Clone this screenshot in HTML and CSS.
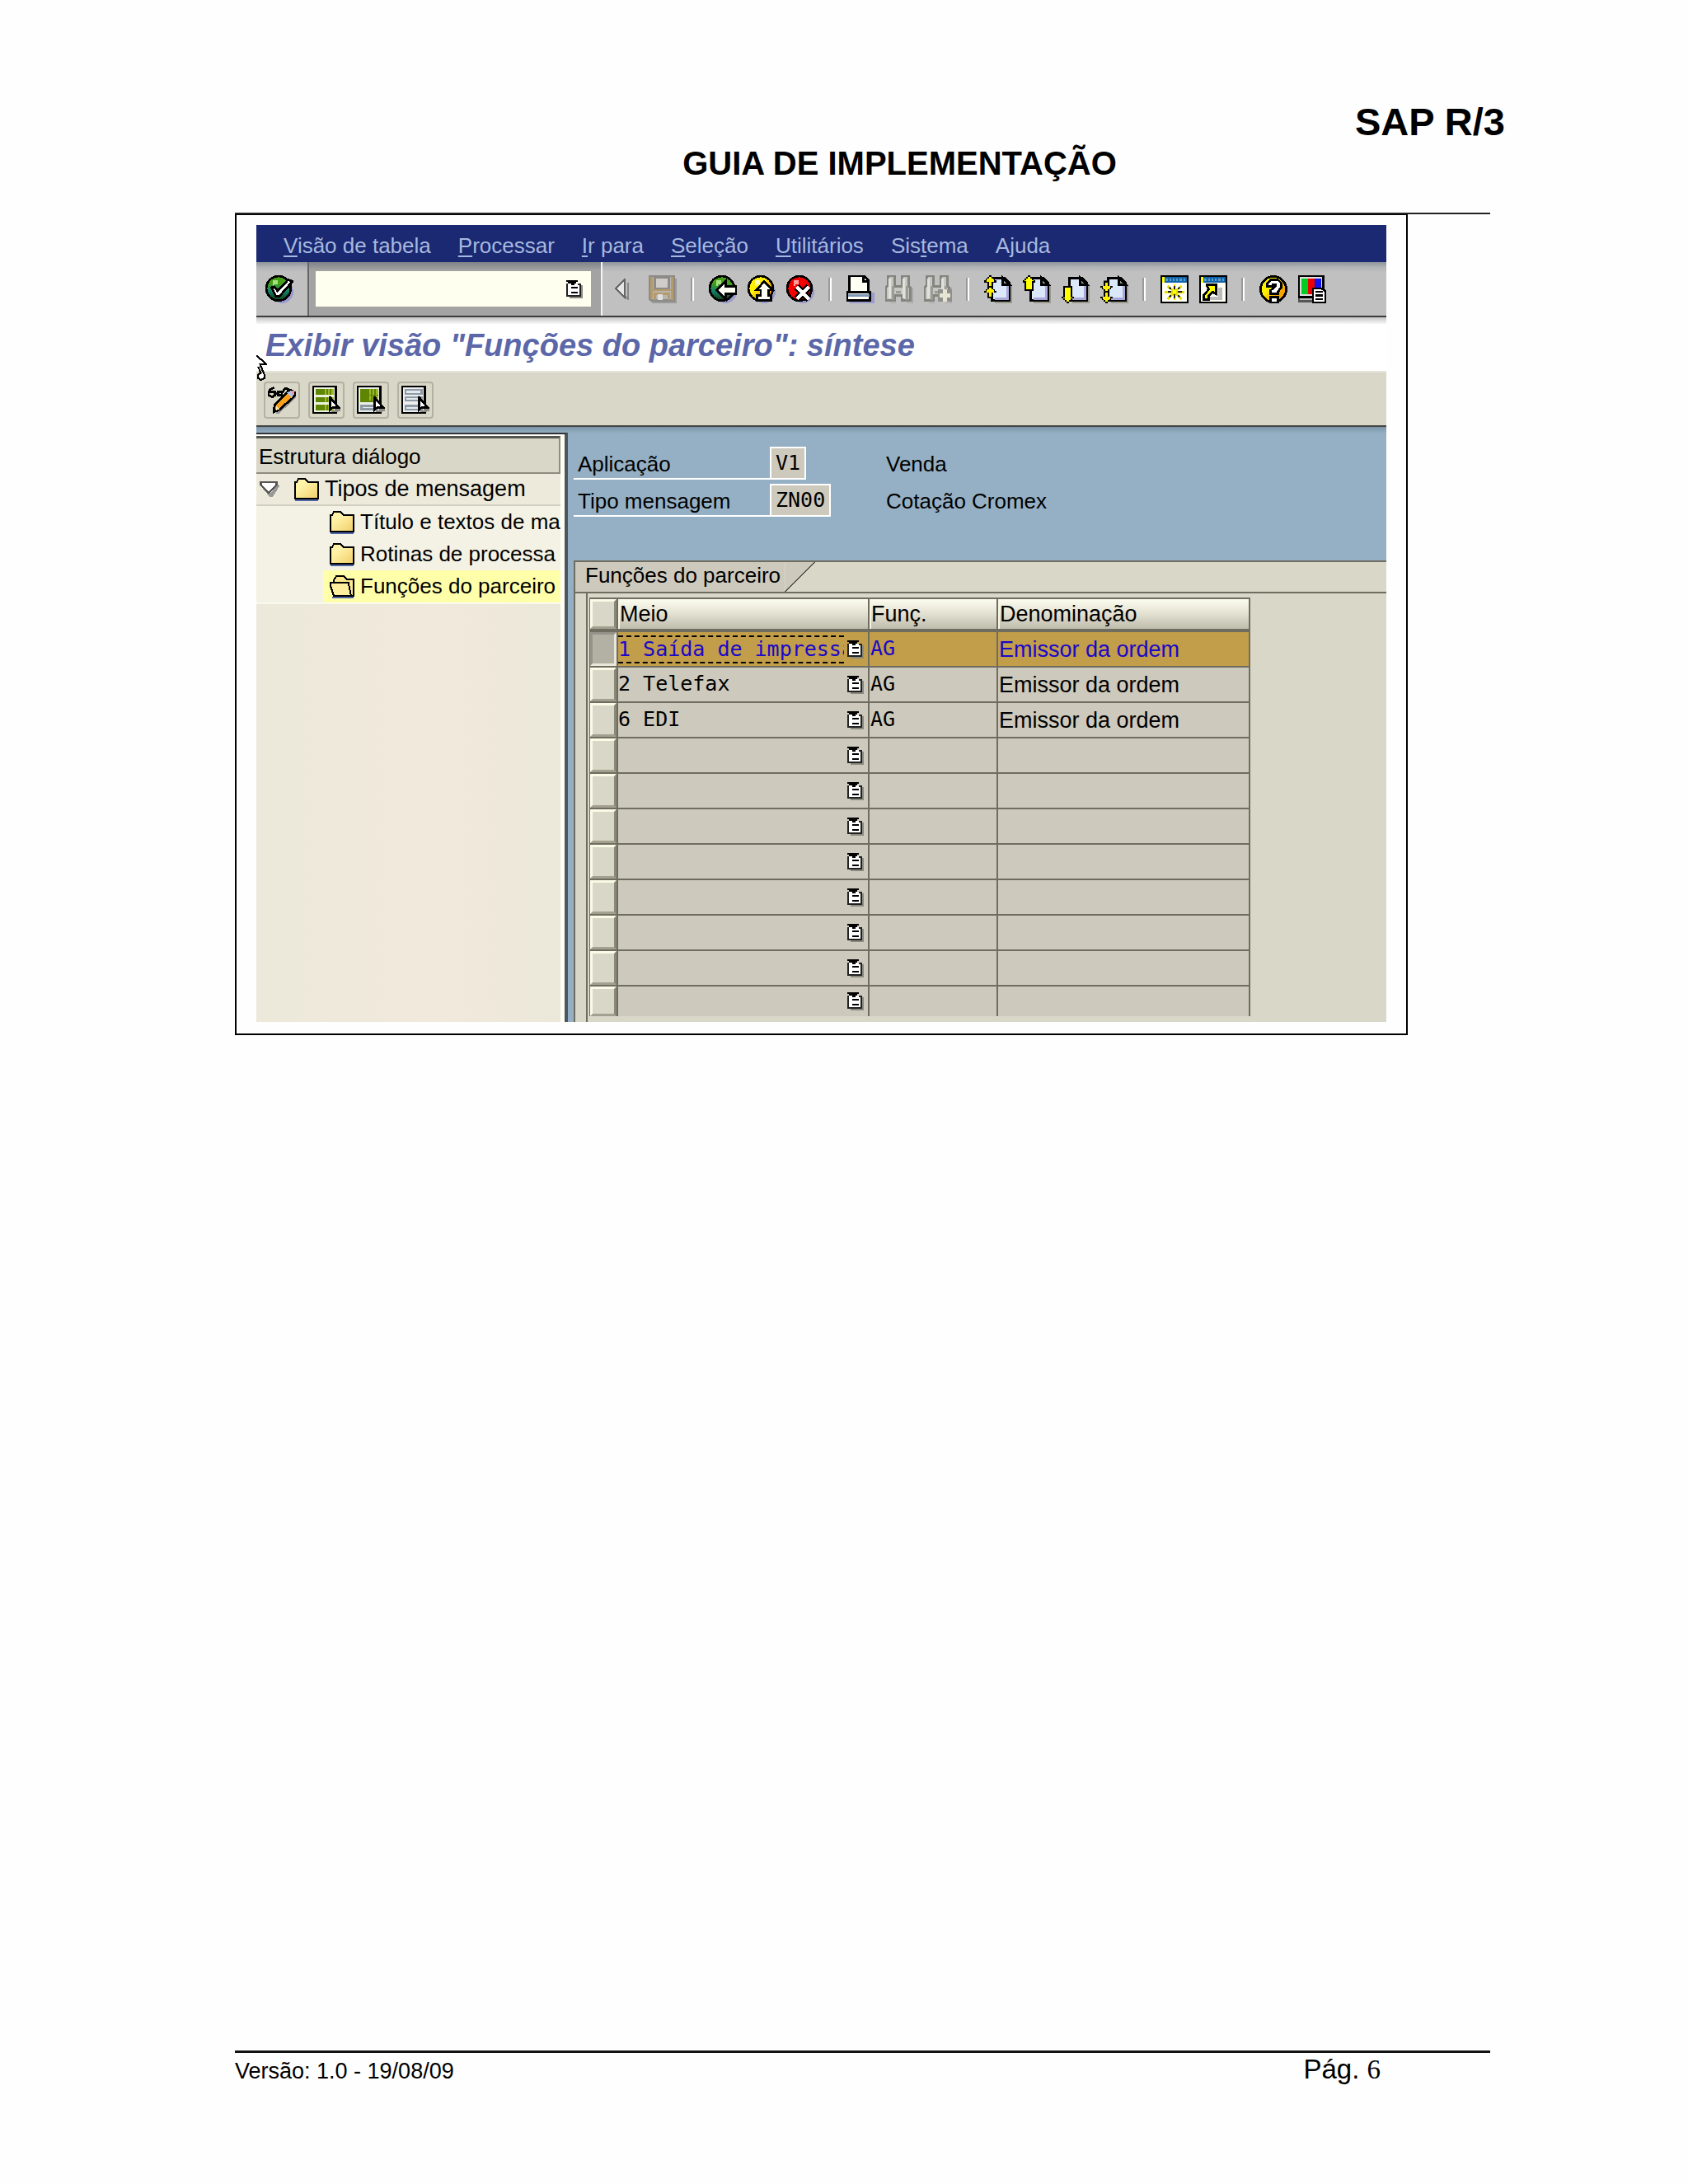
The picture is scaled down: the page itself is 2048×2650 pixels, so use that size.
FILE: index.html
```
<!DOCTYPE html>
<html lang="pt-BR">
<head>
	<meta charset="utf-8">
	<meta name="viewport" content="width=device-width, initial-scale=1.0">
	<title>SAP R/3 - Guia de Implementação</title>
	<link rel="stylesheet" href="styles.css">
</head>
<body>
	<!-- Shared icons -->
	<svg class="sprite" aria-hidden="true">
		<defs>
			<linearGradient id="gGreen" x1="0" y1="0" x2="0" y2="1"><stop offset="0.3" stop-color="#45a018"/><stop offset="0.6" stop-color="#14806c"/><stop offset="1" stop-color="#123c12"/></linearGradient>
			<linearGradient id="gYellow" x1="0" y1="0" x2="1" y2="1"><stop offset="0.4" stop-color="#fff000"/><stop offset="0.7" stop-color="#f5a400"/></linearGradient>
			<linearGradient id="gRed" x1="0" y1="0" x2="1" y2="1"><stop offset="0.5" stop-color="#f60000"/><stop offset="1" stop-color="#7c0010"/></linearGradient>
			<linearGradient id="gFolder" x1="0" y1="0" x2="1" y2="1"><stop offset="0.3" stop-color="#fff3a8"/><stop offset="1" stop-color="#f0cd6a"/></linearGradient>
		</defs>
		<symbol id="combo" viewBox="0 0 10 11">
			<path d="M2 10.500H9.500V3" fill="none" stroke="#8b8a80"/>
			<path d="M1 2H8V9H1Z" fill="#fff"/>
			<path d="M0.500 2V9.500H8.500V2.500H7" fill="none" stroke="#222"/>
			<path d="M0 0H7V1H6V2H5V3H3V2H1V1H0ZM3 4H7V5H3ZM3 7H7V8H3Z" fill="#000"/>
		</symbol>
		<symbol id="folder" viewBox="0 0 15 14">
			<path d="M0.500 13.500H14.500" stroke="#5166a8"/>
			<path d="M0.500 12.500V2.500H1.500L2.500 0.500H6.500L8.500 2.500H14.500V12.500Z" fill="url(#gFolder)" stroke="#000"/>
		</symbol>
		<symbol id="folder-open" viewBox="0 0 15 14">
			<path d="M1.500 13.500H14.500" stroke="#5166a8"/>
			<path d="M2.500 12.500V3L4 0.500H8.500L10.500 2.500H14.500V12.500Z" fill="#fbe88f" stroke="#000"/>
			<path d="M0.500 5V6.500L2.500 12.500H13L11.500 5.500V4.500H0.500Z" fill="#ffee9e" stroke="#000"/>
		</symbol>
		<symbol id="page" viewBox="0 0 16 16">
			<path d="M6 15.500H15.500V5" fill="none" stroke="#9b998d"/>
			<path d="M4.500 1.500H11.500L14.500 4.500V14.500H4.500Z" fill="#dbe8fa" stroke="#000"/>
			<path d="M6 13.400H13.400V6" fill="none" stroke="#a9a8d8" stroke-width="1"/>
			<path d="M10.500 1.500V5.500H14.500Z" fill="#8a948f" stroke="#000"/>
		</symbol>
		<symbol id="up" viewBox="0 0 7 7">
			<path d="M3 0H4V1H5V2H6V3H7V4H5V7H2V4H0V3H1V2H2V1H3Z" fill="#000"/>
			<path d="M3 1H4V2H5V3H4V6H3V3H2V2H3Z" fill="#ff0"/>
			<path d="M1.500 3.200H5.500M3.500 2V6" stroke="#ffee00"/>
		</symbol>
		<symbol id="binoculars" viewBox="0 0 16 16">
			<path d="M3 16H6M12 16H15.500V7" fill="none" stroke="#aaa"/>
			<path d="M1.500 0.500H5.500V6.500H9.500V0.500H13.500V6L14.500 7.500V14.500H9.500V11.500H5.500V14.500H0.500V7L1.500 6Z" fill="#c6c6c2" stroke="#84857f"/>
			<path d="M2.500 2V13M10.500 2V13" stroke="#e2e2dc"/>
			<path d="M4.500 6V14M12.500 6V14M6 9.500H9" stroke="#9b9c96"/>
		</symbol>
		<symbol id="pointer" viewBox="0 0 6 9">
			<path d="M1.500 9H5M3 8H6V7" fill="none" stroke="#8e8d84"/>
			<path d="M0.500 0.500V8L2 6.500H5.500Z" fill="#fff" stroke="#000"/>
		</symbol>
	</svg>

	<div class="page">
		<header class="page-header">
			<div class="product">SAP R/3</div>
			<h1>GUIA DE IMPLEMENTAÇÃO</h1>
		</header>

		<main class="frame">
			<div class="window">
				<nav class="menu">
					<a href="#"><u>V</u>isão de tabela</a>
					<a href="#"><u>P</u>rocessar</a>
					<a href="#"><u>I</u>r para</a>
					<a href="#"><u>S</u>eleção</a>
					<a href="#"><u>U</u>tilitários</a>
					<a href="#">Sis<u>t</u>ema</a>
					<a href="#">A<u>j</u>uda</a>
				</nav>

				<div class="toolbar">
					<div class="ok">
						<button type="button" aria-label="Continuar">
							<svg viewBox="0 0 16 16"><circle cx="9.500" cy="9.500" r="6.500" fill="#9c9acc"/><circle cx="7.500" cy="7.500" r="7" fill="url(#gGreen)" stroke="#000"/><path d="M4 3H7V5H5V6H4Z" fill="#a4e080"/><path d="M3.500 7L5 6.500L7 9L13 2.500L15.500 3.500L8 12H6Z" fill="#fff" stroke="#000"/></svg>
						</button>
					</div>
					<div class="command">
						<div class="command-box">
							<input type="text" aria-label="Comando">
							<button type="button" aria-label="Histórico"><svg class="combo"><use href="#combo"/></svg></button>
						</div>
					</div>
					<div class="tools">
						<button type="button" class="back" aria-label="Recolher" disabled>
							<svg viewBox="0 0 8 12"><path d="M2 7L7.500 11.500V2" fill="none" stroke="#888"/><path d="M0.500 5.500L5.500 0.500V10.500Z" fill="#e6e6e6" stroke="#666"/></svg>
						</button>
						<button type="button" aria-label="Gravar" disabled>
							<svg viewBox="0 0 16 16"><path d="M2 15.500H15.500V2" fill="none" stroke="#999"/><path d="M0.500 0.500H14.500V14.500H1.500L0.500 13.500Z" fill="#b9b5ae" stroke="#8c8b88"/><path d="M1.500 1V13M13.500 1V14M2 8.500H13M3.500 14V10.500H11.500V14" fill="none" stroke="#b59b6c"/><path d="M3.500 1H11.500V7.500H3.500Z" fill="#cfcdca" stroke="#8c8b88"/><path d="M5 11H8V14H5Z" fill="#dedede"/></svg>
						</button>
						<span class="sep"></span>
						<button type="button" aria-label="Voltar">
							<svg viewBox="0 0 16 16"><circle cx="9.500" cy="9.500" r="6.500" fill="#9c9acc"/><circle cx="7.500" cy="7.500" r="7" fill="url(#gGreen)" stroke="#000"/><path d="M4 3H7V5H5V6H4Z" fill="#a4e080"/><path d="M4.500 8.500L9.500 3.500V6.500H15.500V10.500H9.500V13.500Z" fill="#fffff4" stroke="#000"/></svg>
						</button>
						<button type="button" aria-label="Encerrar">
							<svg viewBox="0 0 16 16"><circle cx="9.500" cy="9.500" r="6.500" fill="#9c9acc"/><circle cx="7.500" cy="7.500" r="7" fill="url(#gYellow)" stroke="#000"/><path d="M4 3H7V5H5V6H4Z" fill="#fffbc0"/><path d="M9.500 3.500L14.500 8.500H12V11.500H13.500V14.500H5.500V11.500H7.500V8.500H5Z" fill="#fffff4" stroke="#000"/></svg>
						</button>
						<button type="button" aria-label="Cancelar">
							<svg viewBox="0 0 16 16"><circle cx="9.500" cy="9.500" r="6.500" fill="#9c9acc"/><circle cx="7.500" cy="7.500" r="7" fill="url(#gRed)" stroke="#000"/><path d="M4 3H7V5H5V6H4Z" fill="#ffa0a0"/><path d="M6 6.500L13 13.500M13 6.500L6 13.500" stroke="#000" stroke-width="4"/><path d="M6 6.500L13 13.500M13 6.500L6 13.500" stroke="#fff" stroke-width="2"/></svg>
						</button>
						<span class="sep"></span>
						<button type="button" aria-label="Imprimir">
							<svg viewBox="0 0 16 16"><path d="M2 15H15V10" fill="none" stroke="#9c9acc" stroke-width="2"/><path d="M0.500 9.500H13.500V14.500H0.500Z" fill="#fffff4" stroke="#000"/><path d="M1 11.500H13" stroke="#7f98b8"/><path d="M1.500 9.500V0.500H10L12.500 3V9.500Z" fill="#fffff4" stroke="#000"/><path d="M9.500 0.500V3.500H12.500" fill="none" stroke="#000"/></svg>
						</button>
						<button type="button" aria-label="Procurar" disabled><svg><use href="#binoculars"/></svg></button>
						<button type="button" aria-label="Continuar a procurar" disabled>
							<svg viewBox="0 0 16 16"><use href="#binoculars"/><path d="M8 8H16V15H8Z" fill="#8f908a"/><path d="M12 8V15M9 11.500H15" stroke="#e6e4d4" stroke-width="2"/></svg>
						</button>
						<span class="sep"></span>
						<button type="button" aria-label="Primeira página">
							<svg viewBox="0 0 16 16"><use href="#page"/><use href="#up" x="0" y="0" width="7" height="7"/><use href="#up" x="0" y="6" width="7" height="7"/></svg>
						</button>
						<button type="button" aria-label="Página anterior">
							<svg viewBox="0 0 16 16"><use href="#page"/><path d="M3 0H4V1H5V2H6V3H7V4H6V9H1V4H0V3H1V2H2V1H3Z" fill="#000"/><path d="M3 1H4V2H5V3H6V3.500H5V8H2V3.500H1V3H2V2H3Z" fill="#ff0"/></svg>
						</button>
						<button type="button" aria-label="Próxima página">
							<svg viewBox="0 0 16 16"><use href="#page"/><path d="M3 16H4V15H5V14H6V13H7V12H6V6H1V12H0V13H1V14H2V15H3Z" fill="#000"/><path d="M3 15H4V14H5V13H6V12.500H5V7H2V12.500H1V13H2V14H3Z" fill="#ff0"/></svg>
						</button>
						<button type="button" aria-label="Última página">
							<svg viewBox="0 0 16 16"><use href="#page"/><g transform="matrix(1 0 0 -1 0 16)"><use href="#up" x="0" y="0" width="7" height="7"/><use href="#up" x="0" y="6" width="7" height="7"/></g></svg>
						</button>
						<span class="sep"></span>
						<button type="button" aria-label="Criar modo">
							<svg viewBox="0 0 16 16"><path d="M0.500 0.500H15.500V15.500H0.500Z" fill="#fffff4" stroke="#000"/><path d="M2 1H15V4H2Z" fill="#1264a8"/><path d="M3 2.500H15" stroke="#5c9ad0" stroke-dasharray="1 1"/><path d="M1.500 1V4" stroke="#ff0"/><path d="M8 5V14M2.500 9.500H13.500M4 6L12 13.500M12 6L4 13.500" stroke="#e6de00"/><path d="M8 6V8M8 11V13M4 9.500H6M10 9.500H12M5 7L6 8M11 7L10 8M5 12.500L6 11.500M11 12.500L10 11.500" stroke="#222" stroke-width="1"/><path d="M7 8.500H9V10.500H7Z" fill="#ff0"/></svg>
						</button>
						<button type="button" aria-label="Gerar atalho">
							<svg viewBox="0 0 16 16"><path d="M0.500 0.500H15.500V15.500H0.500Z" fill="#fffff4" stroke="#000"/><path d="M2 1H15V4H2Z" fill="#1264a8"/><path d="M3 2.500H15" stroke="#5c9ad0" stroke-dasharray="1 1"/><path d="M1.500 1V4" stroke="#ff0"/><path d="M6 13H12V7" fill="none" stroke="#bbb" stroke-width="2"/><path d="M2.500 14V11.500L5.500 8L4.500 6V5.500H9.500V10.500L7.500 9.500L5.500 11.500V14Z" fill="#ff0" stroke="#000"/></svg>
						</button>
						<span class="sep"></span>
						<button type="button" aria-label="Ajuda">
							<svg viewBox="0 0 16 16"><circle cx="8" cy="8" r="7.300" fill="url(#gYellow)" stroke="#000"/><path d="M4.500 6.500V4.500L6.500 2.500H10.500L12.500 4.500V7L10.500 9.500V10.500H6.500V8.500L9 6.500V5.500H7.500V6.500Z" fill="#fff" stroke="#000"/><path d="M6.500 12.500H10.500V15.500H6.500Z" fill="#fff" stroke="#000"/></svg>
						</button>
						<button type="button" aria-label="Ajustar layout">
							<svg viewBox="0 0 16 16"><path d="M0.500 12.500H10V15H0.500Z" fill="#bbb" stroke="#555"/><path d="M0.500 0.500H14.500V12.500H0.500Z" fill="#e2e2e2" stroke="#000"/><path d="M2 2H5.500V11H2Z" fill="#0c2"/><path d="M5.500 2H9.500V11H5.500Z" fill="#e00"/><path d="M9.500 2H13V11H9.500Z" fill="#11e"/><path d="M8.500 7.500H13.500L15.500 9V15.500H8.500Z" fill="#fff" stroke="#000"/><path d="M10 9.500H14M10 11.500H14M10 13.500H14" stroke="#000" stroke-width="1"/></svg>
						</button>
					</div>
				</div>

				<h2 class="title">Exibir visão "Funções do parceiro": síntese
					<svg class="cursor" viewBox="0 0 6 15" aria-hidden="true"><path d="M0 0.500L5.500 5.500H2.500L4.500 11L4.500 13.500L2.500 14.500L1 13L2.500 11L1 7.500L0 8.500Z" fill="#fff"/><path d="M0 0.500L5.500 5.500H2L4.500 11.500V13.500L2.500 14.500L1 13.500V11.500L2.500 10.500L1 7" fill="none" stroke="#000"/></svg>
				</h2>

				<div class="actions">
					<button type="button" aria-label="Exibir / modificar">
						<svg viewBox="0 0 16 16"><path d="M4.500 15H6L15.500 6V4" fill="none" stroke="#999" stroke-width="2"/><path d="M3.500 1L1.500 2L0.500 4V5.500L2.500 6.500L4 5.500V3.500H1.500M6 5.500V3.500H8V5.500ZM4 4.500H6M8 4L10 1.500L11.500 2V4.500L9.500 5" fill="none" stroke="#000"/><path d="M3.500 13.500L4 11L12 3L13 2.500L15.500 4V5.500L7 13.500L3.500 15Z" fill="#f7a01c" stroke="#000"/><path d="M11 4L13 3L15 5L13.500 7Z" fill="#b7c2ea"/><path d="M13 3H15V5H14Z" fill="#e79aa8"/><path d="M4.500 11.500L6.500 13.500L4.500 14Z" fill="#ffeab8"/></svg>
					</button>
					<button type="button" aria-label="Marcar todas">
						<svg viewBox="0 0 16 16"><path d="M0.500 0.500H13.500V15.500H0.500Z" fill="#edf2df" stroke="#000"/><path d="M2 2H12V5H2ZM2 6.500H12V9.500H2ZM2 11H12V14H2Z" fill="#5f8600"/><path d="M7 3.500H12M7 8H12M7 12.500H12" stroke="#9ab82a" stroke-width="3" stroke-dasharray="1 1"/><use href="#pointer" x="9" y="6" width="7" height="9"/></svg>
					</button>
					<button type="button" aria-label="Marcar bloco">
						<svg viewBox="0 0 16 16"><path d="M0.500 0.500H13.500V15.500H0.500Z" fill="#e9eeea" stroke="#000"/><path d="M2 2H12V9.500H2Z" fill="#5f8600"/><path d="M7 3.500H12M7 7H12" stroke="#9ab82a" stroke-width="3" stroke-dasharray="1 1"/><path d="M2.500 11.500H11.500V13.500H2.500Z" fill="#e3e9ef" stroke="#8d9aa4"/><use href="#pointer" x="9" y="6" width="7" height="9"/></svg>
					</button>
					<button type="button" aria-label="Desmarcar todas">
						<svg viewBox="0 0 16 16"><path d="M0.500 0.500H13.500V15.500H0.500Z" fill="#edefee" stroke="#000"/><path d="M2.500 2.500H11.500V4.500H2.500ZM2.500 6.500H11.500V8.500H2.500ZM2.500 11.500H11.500V13.500H2.500Z" fill="#e3e9ef" stroke="#8d9aa4" stroke-width="1"/><use href="#pointer" x="9" y="6" width="7" height="9"/></svg>
					</button>
				</div>

				<div class="content">
					<aside class="tree">
						<div class="tree-inner">
							<div class="tree-head">Estrutura diálogo</div>
							<div class="node root">
								<svg class="twisty" viewBox="0 0 11 9"><path d="M2 3L6.500 8.500L10.500 2" fill="none" stroke="#999" stroke-width="2"/><path d="M0.500 0.500H9.500V2L5 6.500L0.500 2Z" fill="#fff" stroke="#555"/></svg>
								<svg class="folder"><use href="#folder"/></svg>
								<span>Tipos de mensagem</span>
							</div>
							<div class="node"><svg class="folder"><use href="#folder"/></svg><span>Título e textos de ma</span></div>
							<div class="node"><svg class="folder"><use href="#folder"/></svg><span>Rotinas de processa</span></div>
							<div class="node selected"><svg class="folder"><use href="#folder-open"/></svg><span>Funções do parceiro</span></div>
							<div class="tree-rest"></div>
						</div>
					</aside>

					<section class="detail">
						<div class="fields">
							<div class="field">
								<label for="aplicacao">Aplicação</label>
								<div class="value"><input id="aplicacao" class="short" type="text" value="V1" readonly></div>
								<span>Venda</span>
							</div>
							<div class="field">
								<label for="tipo">Tipo mensagem</label>
								<div class="value"><input id="tipo" type="text" value="ZN00" readonly></div>
								<span>Cotação Cromex</span>
							</div>
						</div>

						<div class="tabs">
							<button type="button" class="tab">Funções do parceiro</button>
							<svg class="slant" viewBox="0 0 37 37"><path d="M0 0H37L0 37Z" fill="#cdc9bc"/><path d="M0 37L37 0" stroke="#55554c" stroke-width="2"/></svg>
						</div>

						<div class="panel">
							<div class="panel-inner">
								<table class="grid">
									<colgroup><col class="c-sel"><col class="c-meio"><col class="c-func"><col class="c-den"></colgroup>
									<thead>
										<tr><th class="sel"><button type="button" aria-label="Marcar tudo"></button></th><th>Meio</th><th>Funç.</th><th>Denominação</th></tr>
									</thead>
									<tbody>
										<tr class="current">
											<td class="sel"><button type="button" aria-label="Linha 1"></button></td>
											<td><div class="pick"><select aria-label="Meio 1"><option>1 Saída de impressão</option></select><svg class="combo"><use href="#combo"/></svg></div></td>
											<td class="code">AG</td>
											<td>Emissor da ordem</td>
										</tr>
										<tr>
											<td class="sel"><button type="button" aria-label="Linha 2"></button></td>
											<td><div class="pick"><select aria-label="Meio 2"><option>2 Telefax</option></select><svg class="combo"><use href="#combo"/></svg></div></td>
											<td class="code">AG</td>
											<td>Emissor da ordem</td>
										</tr>
										<tr>
											<td class="sel"><button type="button" aria-label="Linha 3"></button></td>
											<td><div class="pick"><select aria-label="Meio 3"><option>6 EDI</option></select><svg class="combo"><use href="#combo"/></svg></div></td>
											<td class="code">AG</td>
											<td>Emissor da ordem</td>
										</tr>
										<tr><td class="sel"><button type="button" aria-label="Linha 4"></button></td><td><div class="pick"><select aria-label="Meio 4"></select><svg class="combo"><use href="#combo"/></svg></div></td><td></td><td></td></tr>
										<tr><td class="sel"><button type="button" aria-label="Linha 5"></button></td><td><div class="pick"><select aria-label="Meio 5"></select><svg class="combo"><use href="#combo"/></svg></div></td><td></td><td></td></tr>
										<tr><td class="sel"><button type="button" aria-label="Linha 6"></button></td><td><div class="pick"><select aria-label="Meio 6"></select><svg class="combo"><use href="#combo"/></svg></div></td><td></td><td></td></tr>
										<tr><td class="sel"><button type="button" aria-label="Linha 7"></button></td><td><div class="pick"><select aria-label="Meio 7"></select><svg class="combo"><use href="#combo"/></svg></div></td><td></td><td></td></tr>
										<tr><td class="sel"><button type="button" aria-label="Linha 8"></button></td><td><div class="pick"><select aria-label="Meio 8"></select><svg class="combo"><use href="#combo"/></svg></div></td><td></td><td></td></tr>
										<tr><td class="sel"><button type="button" aria-label="Linha 9"></button></td><td><div class="pick"><select aria-label="Meio 9"></select><svg class="combo"><use href="#combo"/></svg></div></td><td></td><td></td></tr>
										<tr><td class="sel"><button type="button" aria-label="Linha 10"></button></td><td><div class="pick"><select aria-label="Meio 10"></select><svg class="combo"><use href="#combo"/></svg></div></td><td></td><td></td></tr>
										<tr><td class="sel"><button type="button" aria-label="Linha 11"></button></td><td><div class="pick"><select aria-label="Meio 11"></select><svg class="combo"><use href="#combo"/></svg></div></td><td></td><td></td></tr>
									</tbody>
								</table>
							</div>
						</div>
					</section>
				</div>
			</div>
		</main>

		<footer class="page-footer">
			<span class="version">Versão: 1.0 - 19/08/09</span>
			<span class="number">Pág. <span class="digit">6</span></span>
		</footer>
	</div>
</body>
</html>
```
FILE: styles.css
```
:root {
	--navy: #1a2972;
	--beige: #d9d7c7;
	--cell: #cdc9bc;
	--line: #6f6d60;
	--blue: #95b0c4;
	--sans: "Liberation Sans", Arial, sans-serif;
	--mono: "DejaVu Sans Mono", monospace;
}

* { box-sizing: border-box; }

body {
	margin: 0;
	background: #fefefe;
	color: #000;
	font-family: var(--sans);
	font-size: 26px;
}

button {
	padding: 0;
	border: none;
	background: none;
	color: inherit;
	font: inherit;
}

svg {
	display: block;
	flex: none;
	shape-rendering: crispEdges;
}

.sprite {
	position: absolute;
	width: 0;
	height: 0;
}

.combo {
	width: 20px;
	height: 22px;
}

/* Printed page */
.page {
	display: flex;
	flex-direction: column;
	min-height: 100vh;
	padding: 121px 240px 118px 285px;
}

.page-header {
	padding-bottom: 37px;
	border-bottom: 2px solid #222;
	font-weight: bold;
}

.product {
	margin-right: -18px;
	font-size: 47px;
	line-height: 54px;
	text-align: right;
}

.page-header h1 {
	margin: 0;
	padding-left: 90px;
	font-size: 40px;
	line-height: 46px;
	text-align: center;
}

.frame {
	margin-right: 100px;
	padding: 12px 24px 14px;
	border: 2px solid #000;
	border-top-width: 1px;
}

.page-footer {
	display: flex;
	justify-content: space-between;
	align-items: baseline;
	margin-top: auto;
	padding: 1px 133px 0 0;
	border-top: 3px solid #111;
	line-height: 38px;
}

.version { font-size: 27px; }
.number { font-size: 33px; }
.digit { font-family: "Liberation Serif", "Times New Roman", serif; }

/* Menu */
.menu {
	display: flex;
	align-items: center;
	gap: 33px;
	height: 45px;
	padding: 6px 33px 0;
	background: var(--navy);
}

.menu a {
	color: #a6b8de;
	text-decoration: none;
}

.menu u {
	text-decoration-thickness: 2px;
	text-underline-offset: 3px;
}

/* Standard toolbar */
.toolbar {
	display: flex;
	height: 67px;
	border-bottom: 2px solid #3c3c3c;
	background: linear-gradient(#8d939b, #b0b2b5 6px, #c0c0c0 12px);
}

.toolbar svg {
	width: 34px;
	height: 34px;
}

.toolbar svg,
.actions svg { stroke-width: 1.300; }

.ok {
	display: flex;
	align-items: center;
	width: 64px;
	padding-left: 11px;
	border-right: 2px solid #666;
}

.command {
	display: flex;
	align-items: center;
	width: 356px;
	padding: 0 12px 0 8px;
	border-right: 2px solid #f4f4f4;
	background: linear-gradient(#7d8187, #a3a3a3 10px);
}

.command-box {
	display: flex;
	align-items: center;
	width: 100%;
	height: 43px;
	padding-right: 10px;
	background: #feffee;
}

.command-box input {
	flex: 1;
	min-width: 0;
	border: none;
	background: none;
	font: inherit;
}

.command-box .combo {
	width: 20px;
	height: 22px;
	stroke-width: 1;
}

.tools {
	display: flex;
	align-items: center;
	gap: 13px;
	padding-left: 15px;
}

.tools .back { margin-right: 11px; }

.tools .back svg {
	width: 17px;
	height: 26px;
	stroke-width: 1;
}

.sep {
	width: 4px;
	height: 28px;
	margin: 0 4px;
	border-left: 2px solid #999;
	background: #fff;
}

.sep + button { margin-left: 1px; }

.title {
	position: relative;
	margin: 0;
	height: 67px;
	padding: 2px 11px 0;
	border-bottom: 2px solid #e6e4da;
	background: linear-gradient(#c4c4c4, #fff 9px);
	color: #5b67a8;
	font-size: 38px;
	font-style: italic;
	line-height: 65px;
}

.cursor {
	position: absolute;
	left: 0;
	top: 45px;
	width: 13px;
	height: 32px;
}

.actions {
	display: flex;
	align-items: center;
	gap: 10px;
	height: 66px;
	padding: 2px 9px 0;
	border-bottom: 2px solid #444;
	background: var(--beige);
}

.actions button {
	display: flex;
	align-items: center;
	justify-content: center;
	width: 44px;
	height: 45px;
	border: 2px solid #b4b1a2;
	border-radius: 4px;
}

.actions svg {
	width: 34px;
	height: 34px;
}

/* Work area */
.content {
	display: flex;
	background: linear-gradient(#7b93a8, var(--blue) 8px);
}

.tree {
	display: flex;
	flex: none;
	width: 378px;
	margin: 7px 7px 0 0;
	border-top: 2px solid #333;
	border-right: 4px solid #4c565c;
}

.tree-inner {
	display: flex;
	flex-direction: column;
	width: 100%;
	border-top: 2px solid #fff;
	border-right: 5px solid #fffff4;
	background: #f4f2e4;
	overflow: hidden;
	white-space: nowrap;
}

.tree-head {
	height: 46px;
	padding: 0 3px;
	border: solid #8e8c7e;
	border-width: 3px 2px 2px 0;
	border-top-color: #55554e;
	background: var(--beige);
	line-height: 44px;
}

.node {
	display: flex;
	align-items: center;
	gap: 7px;
	height: 39px;
	margin-left: 81px;
	padding-left: 8px;
}

.root {
	margin-left: 0;
	padding-left: 4px;
	border-bottom: 2px solid #d2cfc0;
	background: #edeadb;
	font-size: 27px;
}

.selected { background: #ffffaa; }

.twisty {
	width: 24px;
	height: 19px;
	margin-right: 11px;
}

.folder {
	width: 30px;
	height: 28px;
}

.tree-rest {
	flex: 1;
	border-top: 2px solid #faf9f0;
	background: linear-gradient(90deg, #ece9da, #f1e9dc 60%, #ebe8d9);
}

.detail {
	flex: 1;
	min-width: 0;
}

.fields {
	display: flex;
	flex-direction: column;
	gap: 5px;
	padding: 24px 0 53px;
}

.field {
	display: flex;
	height: 40px;
	line-height: 42px;
}

.field label {
	width: 238px;
	padding-left: 5px;
	border-bottom: 2px solid #fff;
}

.value { width: 141px; }

.value input {
	display: block;
	width: 74px;
	height: 40px;
	padding: 0 5px 2px;
	border: 2px solid #fff;
	background: var(--cell);
	font-family: var(--mono);
	font-size: 25px;
}

.value .short { width: 44px; }

.tabs {
	display: flex;
	height: 40px;
	border: solid var(--line);
	border-width: 2px 0 2px 2px;
	background: var(--beige);
}

.tab {
	padding: 0 0 4px 12px;
	background: var(--cell);
	white-space: nowrap;
}

.slant {
	width: 37px;
	height: 36px;
	margin-left: 5px;
	box-shadow: -5px 0 var(--cell);
}

.panel {
	padding-left: 13px;
	border-left: 2px solid var(--line);
	background: var(--beige);
}

.panel-inner {
	padding: 5px 0 7px 2px;
	border-left: 2px solid var(--line);
}

/* Partner functions table */
.grid {
	table-layout: fixed;
	width: 802px;
	border-spacing: 0;
}

.c-sel { width: 35px; }
.c-meio { width: 305px; }
.c-func { width: 156px; }

.grid th,
.grid td {
	height: 43px;
	padding: 0 1px;
	border: solid var(--line);
	border-width: 0 2px 2px 0;
	background: var(--cell);
	font-size: 27px;
	font-weight: normal;
	line-height: 30px;
	text-align: left;
	white-space: nowrap;
}

.grid th {
	height: 42px;
	padding: 0 2px;
	border-width: 2px 2px 4px 0;
	background: linear-gradient(#fdfdef, #e2e0d1 50%, #bfbcac);
	box-shadow: inset 2px 0 #f6f5e8;
}

.grid .sel {
	padding: 0;
	border-left-width: 1px;
	box-shadow: none;
}

.grid .sel button {
	display: block;
	width: 100%;
	height: 41px;
	border: 3px solid #fbfae6;
	border-right-color: #8a8878;
	border-bottom-color: #a3a08f;
	background: var(--beige);
}

.grid th.sel button { height: 36px; }

.grid .code {
	padding-bottom: 2px;
	font-family: var(--mono);
	font-size: 25px;
}

.grid .current td {
	background: #c29d4a;
	color: #1a08c8;
}

.grid .current .sel button {
	border-color: #96948a #e9e7d8 #e9e7d8 #96948a;
	background: #b3b0a4;
}

.grid tbody tr:last-child td {
	height: 36px;
	border-bottom-width: 0;
}

.grid tbody tr:last-child .sel button { height: 36px; }
.grid tbody tr:last-child select { height: 30px; }

.pick {
	display: flex;
	align-items: center;
	gap: 4px;
	margin-left: -1px;
}

.pick select {
	width: 274px;
	height: 34px;
	padding: 0 0 2px;
	border: none;
	border-radius: 0;
	background: none;
	color: inherit;
	font-family: var(--mono);
	font-size: 25px;
	appearance: none;
}

.current .pick select {
	padding-bottom: 0;
	border: dashed #000;
	border-width: 2px 0;
}
```
